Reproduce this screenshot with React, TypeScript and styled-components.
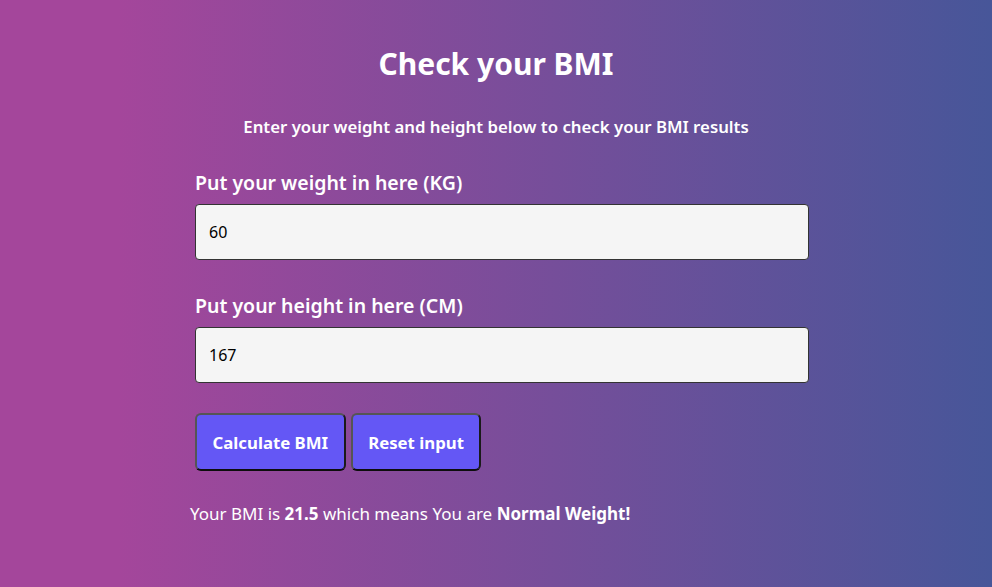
import styled, { createGlobalStyle } from 'styled-components';
import { useState } from 'react';

const GlobalStyle = createGlobalStyle`
  html, body {
    margin: 0;
    padding: 0;
    height: 100%;
  }
  body {
    font-family: 'Noto Sans', 'Open Sans', sans-serif;
    color: #fff;
  }
  #root {
    min-height: 100%;
  }
`;

const Page = styled.div`
  min-height: 587px;
  background: linear-gradient(90deg, #a4469b 12%, #475699 100%);
  padding-top: 45px;
  box-sizing: border-box;
`;

const Container = styled.div`
  width: 628px;
  margin: 0 auto;
  display: flex;
  flex-direction: column;
`;

const Title = styled.h1`
  margin: 0;
  text-align: center;
  font-size: 30px;
  line-height: 38px;
  font-weight: 700;
`;

const Subtitle = styled.p`
  margin: 32px 0 0;
  text-align: center;
  font-size: 16.8px;
  line-height: 24px;
  font-weight: 600;
`;

const Field = styled.div<{ $mt: string }>`
  display: flex;
  flex-direction: column;
  padding-left: 13px;
  margin-top: ${(props) => props.$mt};
`;

const Label = styled.label`
  font-size: 19.5px;
  line-height: 26px;
  font-weight: 600;
  margin-bottom: 8px;
`;

const Input = styled.input`
  width: 614px;
  height: 56px;
  box-sizing: border-box;
  padding: 0 13px;
  border: 1px solid #333;
  border-radius: 4px;
  background: #f5f5f5;
  font-family: inherit;
  font-size: 16px;
  color: #000;
  outline: none;
`;

const Buttons = styled.div`
  display: flex;
  gap: 5px;
  padding-left: 13px;
  margin-top: 30px;
`;

const Button = styled.button`
  height: 58px;
  padding: 0 15.5px;
  border: 2px solid;
  border-color: #555 #1a1a1a #0d0d0d #555;
  border-radius: 6px;
  background: #6457f5;
  color: #fff;
  font-family: inherit;
  font-size: 16.8px;
  font-weight: 700;
  cursor: pointer;
`;

const Result = styled.p`
  margin: 31px 0 0;
  padding-left: 8px;
  font-size: 17px;
  line-height: 24px;
`;

export default function App() {
  const [weight, setWeight] = useState('60');
  const [height, setHeight] = useState('167');
  return (
    <>
      <GlobalStyle />
      <Page>
        <Container>
          <Title>Check your BMI</Title>
          <Subtitle>Enter your weight and height below to check your BMI results</Subtitle>
          <Field $mt="31px">
            <Label>Put your weight in here (KG)</Label>
            <Input value={weight} onChange={(e) => setWeight(e.target.value)} />
          </Field>
          <Field $mt="33px">
            <Label>Put your height in here (CM)</Label>
            <Input value={height} onChange={(e) => setHeight(e.target.value)} />
          </Field>
          <Buttons>
            <Button>Calculate BMI</Button>
            <Button onClick={() => { setWeight(''); setHeight(''); }}>Reset input</Button>
          </Buttons>
          <Result>
            Your BMI is <b>21.5</b> which means You are <b>Normal Weight!</b>
          </Result>
        </Container>
      </Page>
    </>
  );
}
